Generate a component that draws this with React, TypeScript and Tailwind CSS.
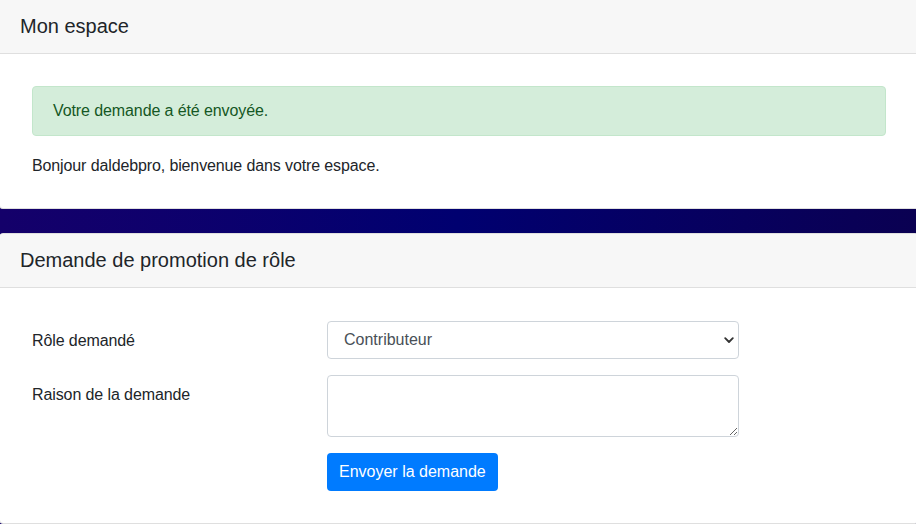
import React from "react";

const font = { fontFamily: '"Segoe UI", "Liberation Sans", Arial, sans-serif' };

function CardHeader({ title }: { title: string }) {
  return (
    <div className="border-b border-[#dfdfdf] bg-[#f7f7f7] px-5 py-3">
      <h5 className="text-[20px] leading-[29px] text-[#212529]">{title}</h5>
    </div>
  );
}

export default function App() {
  return (
    <div
      className="min-h-[524px] w-[916px] overflow-hidden bg-gradient-to-r from-[#14006a] via-[#000070] to-[#0a0052] text-[#212529]"
      style={font}
    >
      <section className="ml-[-1px] mr-[-3px] overflow-hidden rounded-b-[4px] border border-t-0 border-[#dfdfdf] bg-white">
        <CardHeader title="Mon espace" />
        <div className="px-8 pt-8 pb-[30px]">
          <div className="mb-4 rounded-[4px] border border-[#c3e6cb] bg-[#d4edda] px-5 py-3 text-[16px] leading-6 tracking-[-0.1px] text-[#155724]">
            Votre demande a été envoyée.
          </div>
          <p className="pt-[2px] text-[16px] leading-6 tracking-[-0.12px]">
            Bonjour daldebpro, bienvenue dans votre espace.
          </p>
        </div>
      </section>

      <section className="mt-6 ml-[-1px] mr-[-3px] overflow-hidden rounded-[4px] border border-[#dfdfdf] bg-white">
        <CardHeader title="Demande de promotion de rôle" />
        <form className="px-8 pt-[33px] pb-8" onSubmit={(e) => e.preventDefault()}>
          <div className="mb-4 flex">
            <label className="w-[295px] pt-[8px] text-[16px] leading-6 tracking-[-0.1px]">
              Rôle demandé
            </label>
            <div className="relative w-[412px]">
              <select
                defaultValue="Contributeur"
                className="h-[38px] w-full appearance-none rounded-[4px] border border-[#ced4da] bg-white px-4 text-[16px] leading-6 text-[#495057] outline-none"
                style={font}
              >
                <option>Contributeur</option>
                <option>Éditeur</option>
                <option>Administrateur</option>
              </select>
              <svg
                className="pointer-events-none absolute right-[5px] top-[16px]"
                width="10"
                height="7"
                viewBox="0 0 10 7"
              >
                <path
                  d="M1.2 1.2 L5 5 L8.8 1.2"
                  fill="none"
                  stroke="#333"
                  strokeWidth="1.8"
                  strokeLinecap="round"
                  strokeLinejoin="round"
                />
              </svg>
            </div>
          </div>

          <div className="mb-4 flex">
            <label className="w-[295px] pt-[8px] text-[16px] leading-6 tracking-[-0.1px]">
              Raison de la demande
            </label>
            <textarea
              className="h-[62px] w-[412px] rounded-[4px] border border-[#ced4da] bg-white px-3 py-1.5 text-[16px] text-[#495057] outline-none"
              style={font}
            />
          </div>

          <div className="flex">
            <div className="w-[295px]" />
            <button
              type="submit"
              className="h-[38px] rounded-[4px] bg-[#007bff] px-3 text-[16px] leading-6 text-white"
              style={font}
            >
              Envoyer la demande
            </button>
          </div>
        </form>
      </section>
    </div>
  );
}
